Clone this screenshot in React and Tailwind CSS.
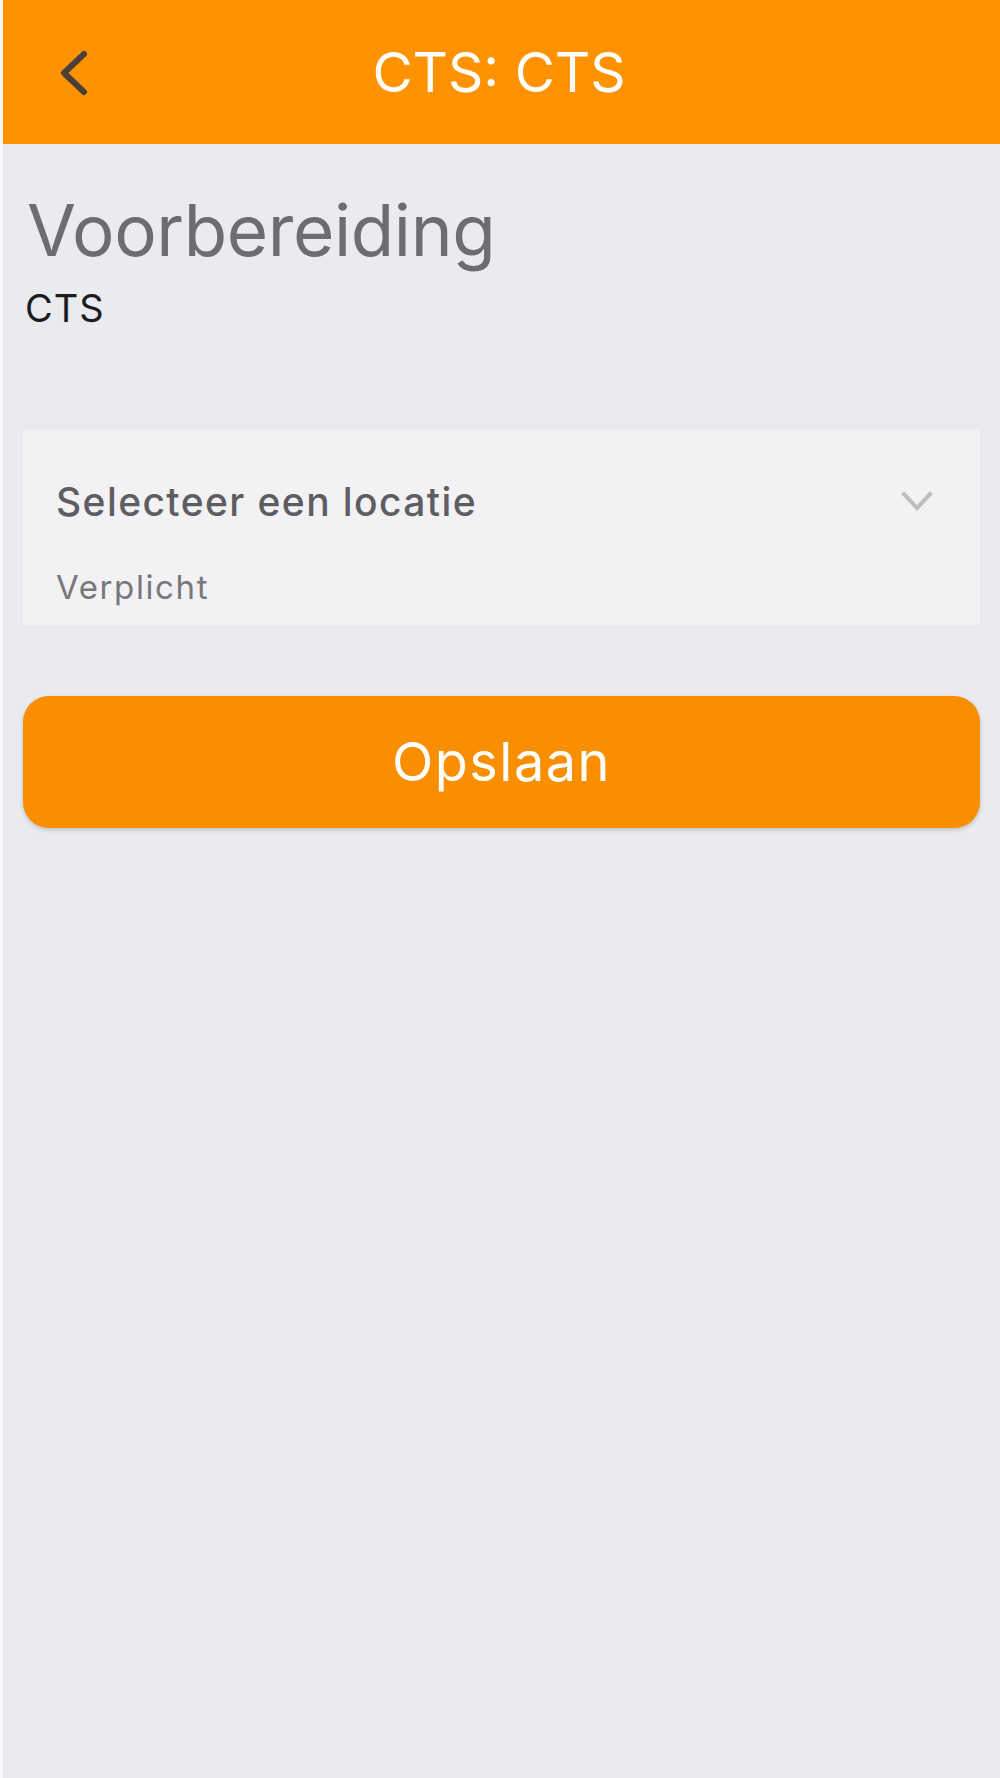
import React from 'react';

function BackChevron() {
  return (
    <svg className="absolute left-[56px] top-[48px]" width="32" height="50" viewBox="0 0 32 50" fill="none">
      <path d="M25 6 L5 25 L25 44" stroke="#4b4037" strokeWidth="6" strokeLinecap="round" strokeLinejoin="round" />
    </svg>
  );
}

function DownChevron() {
  return (
    <svg width="34" height="24" viewBox="0 0 34 24" fill="none">
      <path d="M3 4 L16 18 L29 4" stroke="#bdbdbf" strokeWidth="4" strokeLinecap="square" />
    </svg>
  );
}

export default function App() {
  return (
    <div className="flex min-h-[1778px] w-full bg-[#f6f7f8] font-['Inter','Liberation_Sans',sans-serif]">
      <div className="w-[3px] shrink-0" />
      <div className="flex min-h-[1778px] flex-1 flex-col bg-[#e9ebee]">
        <header className="relative flex h-[144px] items-center justify-center bg-[#ff9200] pr-[5px]">
          <BackChevron />
          <h1 className="text-[55px] leading-none tracking-[0px] text-white">CTS: CTS</h1>
        </header>

        <main className="flex flex-col px-[20px]">
          <h2 className="mt-[51px] pl-[4px] text-[71px] font-normal leading-none tracking-[-0.4px] text-[#6d6d70]">
            Voorbereiding
          </h2>
          <p className="mt-[23px] pl-[2px] text-[38px] leading-none tracking-[1px] text-[#1c1c1e]">CTS</p>

          <div className="mt-[103px] flex h-[195px] flex-col bg-[#f2f2f4] pl-[33px] pr-[45px] pt-[52px]">
            <div className="flex items-center justify-between">
              <span className="text-[39px] font-medium leading-none tracking-[1.4px] text-[#5e5e62]">
                Selecteer een locatie
              </span>
              <DownChevron />
            </div>
            <span className="mt-[50px] text-[33px] leading-none tracking-[1.6px] text-[#78787c]">Verplicht</span>
          </div>

          <button className="mt-[71px] flex h-[132px] items-center justify-center rounded-[26px] bg-[#f88e00] shadow-[0_2px_4px_rgba(0,0,0,0.18)]">
            <span className="text-[54px] leading-none tracking-[1.5px] text-white">Opslaan</span>
          </button>
        </main>
      </div>
    </div>
  );
}
